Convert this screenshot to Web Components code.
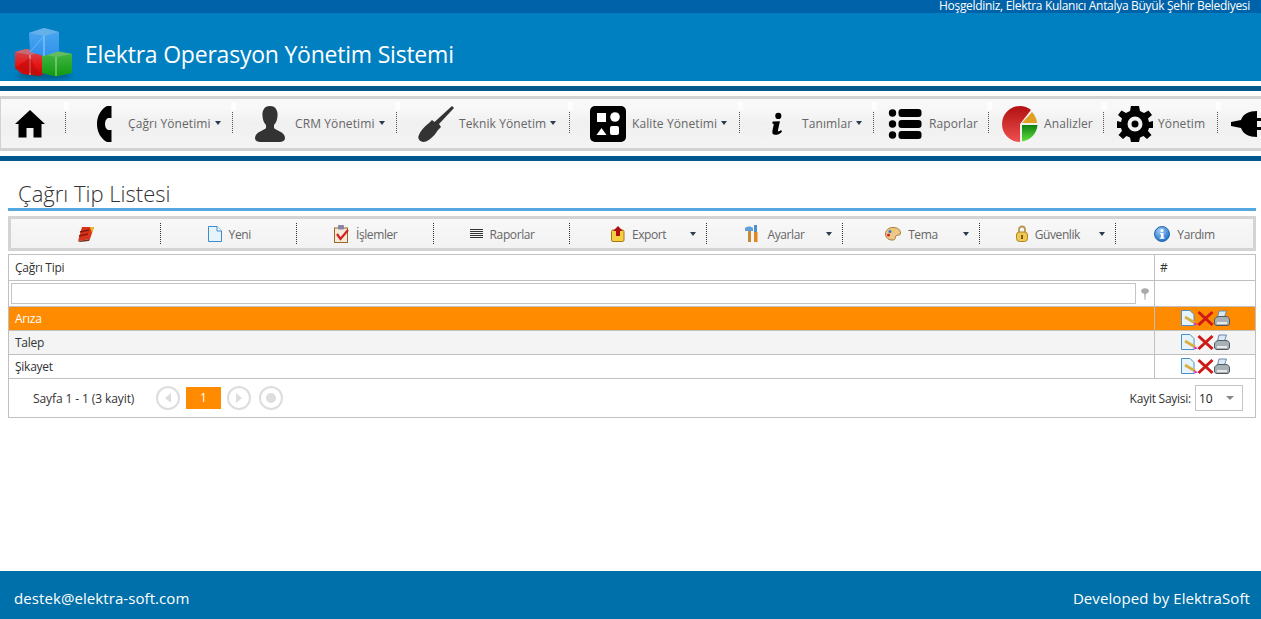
<!DOCTYPE html>
<html lang="tr"><head><meta charset="utf-8"><title>Elektra</title>
<style>
html,body{margin:0;padding:0;height:619px;overflow:hidden;background:#fff;font-family:"Open Sans","Noto Sans",sans-serif}
body{display:flex;flex-direction:column;width:1261px}
</style></head><body>
<el-header></el-header>
<el-menu>
<el-mi w="65" pad="14"><svg width="30" height="28" viewBox="0 0 30 28"><path d="M15 0 L30 14 L26.500 14 L26.500 27.500 L18.500 27.500 L18.500 18 L11.500 18 L11.500 27.500 L3.500 27.500 L3.500 14 L0 14Z" fill="#000"/></svg></el-mi>
<el-mi w="167" pad="31" gap="16" label="Çağrı Yönetimi" caret><svg width="15" height="36" viewBox="0 0 15 36"><path d="M10 0 H14.500 V12 H11 C9 13 8 15 8 18 C8 21 9 23 11 24 H14.500 V36 H10 C4 33 0 26 0 18 C0 10 4 3 10 0Z" fill="#000"/></svg></el-mi>
<el-mi w="164" pad="22" gap="10" label="CRM Yönetimi" caret><svg width="30" height="36" viewBox="0 0 30 36"><path d="M15 0 C21 0 23 5 22.500 10 C22.300 14 21 17 19 19 V22 C21 24.500 30 26 30 32 C30 35 27 36 24 36 H6 C3 36 0 35 0 32 C0 26 9 24.500 11 22 V19 C9 17 7.700 14 7.500 10 C7 5 9 0 15 0Z" fill="#333"/></svg></el-mi>
<el-mi w="173" pad="21" gap="5" label="Teknik Yönetim" caret><svg width="36" height="36" viewBox="0 0 36 36"><path d="M34 0 L36 2 L21 18 L23 21 L20 24 C17 29 12 34 8 35.500 C3 37 -.5 34 .5 30 C2 25 6 21 11 17 L14 14 L16.500 16Z" fill="#333"/></svg></el-mi>
<el-mi w="170" pad="20" gap="6" label="Kalite Yönetimi" caret><svg width="36" height="36" viewBox="0 0 36 36"><rect width="36" height="36" rx="5" fill="#000"/><rect x="7" y="7" width="9" height="9" fill="#fff"/><circle cx="25" cy="11" r="4.800" fill="#fff"/><path d="M11.500 22 L16.500 29 H6.500Z" fill="#fff"/><rect x="20" y="20" width="9" height="9" rx="2" fill="#fff"/></svg></el-mi>
<el-mi w="134" pad="31" gap="18" label="Tanımlar" caret><svg width="13" height="24" viewBox="0 0 16 28"><circle cx="9" cy="4" r="3.800" fill="#000"/><path d="M2 11 L11 10.500 L8.500 22 C8.300 23.500 10 23.500 12.500 21.500 L13.500 23.500 C10 27 6 28 3.500 27 C1.500 26.300 1.300 24 2 21 L3.500 14 L1.500 13.500Z" fill="#000"/></svg></el-mi>
<el-mi w="115" pad="14" gap="7" label="Raporlar"><svg width="34" height="32" viewBox="0 0 33 32"><g fill="#000"><circle cx="4" cy="5" r="3.700"/><circle cx="4" cy="16" r="3.700"/><circle cx="4" cy="27" r="3.700"/><rect x="10" y="1" width="23" height="8" rx="3"/><rect x="10" y="12" width="23" height="8" rx="3"/><rect x="10" y="23" width="23" height="8" rx="3"/></g></svg></el-mi>
<el-mi w="115" pad="13" gap="6" label="Analizler"><svg width="36" height="36" viewBox="0 0 36 36"><defs><linearGradient id="pr" x1="0" y1="0" x2="0" y2="1"><stop offset="0" stop-color="#b01010"/><stop offset="1" stop-color="#f05050"/></linearGradient><linearGradient id="pg" x1="0" y1="0" x2="0" y2="1"><stop offset="0" stop-color="#108010"/><stop offset="1" stop-color="#60e040"/></linearGradient></defs><path d="M18 0 A18 18 0 0 1 29 4 L18 18 L18 36 A18 18 0 0 1 18 0Z" fill="url(#pr)"/><path d="M30 6 A18 18 0 0 1 35 17 H20Z" fill="#e0a020"/><path d="M20 19 H35.500 A18 18 0 0 1 20 35.500Z" fill="url(#pg)"/></svg></el-mi>
<el-mi w="114" pad="13" gap="5" label="Yönetim"><svg width="36" height="36" viewBox="0 0 36 36"><path fill="#000" fill-rule="evenodd" d="M14 0 H22 L23 5 L27 7 L31.500 4.500 L35 9 L31 12.500 L32 16 L36 15 V22 L32 22 L31 25 L34.500 29 L30 33 L26.500 30 L23 31.500 L22 36 H14 L13 31.500 L9.500 30 L6 33 L1.500 29 L5 25 L4 22 H0 V15 L4 16 L5 12.500 L1 9 L4.500 4.500 L9 7 L13 5Z M18 10.500 A7.500 7.500 0 1 0 18 25.500 A7.500 7.500 0 1 0 18 10.500Z M18 14.500 A3.500 3.500 0 1 1 18 21.500 A3.500 3.500 0 1 1 18 14.500Z"/></svg></el-mi>
<el-mi w="60" pad="13"><svg width="40" height="36" viewBox="0 0 40 36"><path d="M0 16 L10 14 C12 8 18 5 26 5 V12 H38 V15 H26 V21 H38 V24 H26 V31 C18 31 12 28 10 22 L0 20Z" fill="#000"/></svg></el-mi>
</el-menu>
<el-rule></el-rule>
<el-title>Çağrı Tip Listesi</el-title>
<el-toolbar>
<el-tool><svg width="18" height="16" viewBox="0 0 18 16"><path d="M5 1 L17 1 L13 13 L1 15Z" fill="#d8341c"/><path d="M13 1 L17 1 L15 7Z" fill="#e8c020"/><path d="M3 6 L12 4 M2 10 L11 8" stroke="#8a1808" stroke-width="1.500"/><path d="M1 15 L13 13 L12 15 L3 16Z" fill="#7a3020"/></svg></el-tool>
<el-tool label="Yeni"><svg width="14" height="16" viewBox="0 0 14 16"><path d="M.5 .5 H9 L13.500 5 V15.500 H.5Z" fill="#e8f4fc" stroke="#3c8cd0"/><path d="M9 .5 V5 H13.500" fill="#fff" stroke="#3c8cd0"/></svg></el-tool>
<el-tool label="İşlemler"><svg width="15" height="18" viewBox="0 0 15 18"><rect x=".5" y="3" width="13" height="14.500" fill="#f4ead8" stroke="#a06428"/><rect x="4" y="0" width="6" height="4.500" rx="1" fill="#8a84a8"/><path d="M3 9 L6.500 14 L14 5" fill="none" stroke="#d02020" stroke-width="2.200"/></svg></el-tool>
<el-tool label="Raporlar"><svg width="13" height="10" viewBox="0 0 13 10"><path d="M0 .5 H13 M0 2.500 H13 M0 4.500 H13 M0 6.500 H13 M0 8.500 H13" stroke="#333"/></svg></el-tool>
<el-tool label="Export" caret><svg width="14" height="16" viewBox="0 0 14 16"><rect x=".5" y="4" width="12.500" height="11.500" rx="1.500" fill="#f4d040" stroke="#a87818"/><path d="M7 0 L12 5 H9 V10 H5 V5 H2Z" fill="#b01010"/></svg></el-tool>
<el-tool label="Ayarlar" caret><svg width="15" height="17" viewBox="0 0 15 17"><rect x="9" y="0" width="3" height="7" fill="#5090d0"/><rect x="9" y="7" width="3.500" height="10" fill="#e08820"/><rect x="3" y="5" width="3" height="12" fill="#c88838"/><path d="M0 3 C2 1 6 1 8 3 V6 H0Z" fill="#60a0d8"/></svg></el-tool>
<el-tool label="Tema" caret><svg width="16" height="14" viewBox="0 0 16 14"><path d="M8 .5 C13 .5 15.500 3 15.500 6 C15.500 8.500 13 8 11.500 8.500 C10 9 11 11 9.500 12.500 C7 14 .5 12.500 .5 7 C.5 3 4 .5 8 .5Z" fill="#eec88a" stroke="#a87838"/><circle cx="5" cy="4.500" r="1.500" fill="#3070d0"/><circle cx="3.500" cy="8" r="1.500" fill="#d02020"/><circle cx="9" cy="3.500" r="1.300" fill="#e8d040"/></svg></el-tool>
<el-tool label="Güvenlik" caret><svg width="12" height="17" viewBox="0 0 12 17"><path d="M3 8 V4.500 C3 .5 9 .5 9 4.500 V8" fill="none" stroke="#b89850" stroke-width="1.800"/><rect x=".5" y="7" width="11" height="9.500" rx="3" fill="#eec850" stroke="#b08828"/><rect x="5" y="10" width="2" height="4" fill="#805818"/></svg></el-tool>
<el-tool label="Yardım"><svg width="16" height="16" viewBox="0 0 16 16"><defs><radialGradient id="ib" cx=".4" cy=".3" r=".8"><stop offset="0" stop-color="#a0d0f8"/><stop offset="1" stop-color="#1060c0"/></radialGradient></defs><circle cx="8" cy="8" r="7.500" fill="url(#ib)" stroke="#2868b0"/><circle cx="8" cy="4.500" r="1.500" fill="#fff"/><path d="M6 7 H9.500 V11.500 H10.500 V12.800 H5.700 V11.500 H7 V8.300 H6Z" fill="#fff"/></svg></el-tool>
</el-toolbar>
<el-grid></el-grid>
<el-footer></el-footer>
<template id="acts"><svg width="50" height="17" viewBox="0 0 50 17"><path d="M1.500 .5 H10 L14 4.500 V15.500 H1.500Z" fill="#e8f4fc" stroke="#4890c8"/><path d="M5 7 L15 13" stroke="#d8b048" stroke-width="2.800"/><path d="M14 12 L18 14.500 L14.500 15.500Z" fill="#e030c0"/><path d="M18.500 2 L32.500 15 M32.500 2 L18.500 15" stroke="#d01818" stroke-width="3"/><path d="M39 1 H46.500 L44.500 7 H37.500Z" fill="#dce8f4" stroke="#6888a8"/><path d="M34.500 10 C35 7.500 37 6.500 39 6.500 H46 C48 6.500 49.500 8 49.500 10 V13 C49.500 14.500 48.500 15.500 47 15.500 H37 C35.500 15.500 34.500 14.500 34.500 13Z" fill="#a8b0b8" stroke="#505860"/><rect x="37" y="12" width="10" height="2" fill="#e8e8e8"/></svg></template>
<script>
const F='"Open Sans","Noto Sans",sans-serif';
function def(n,html,extra){customElements.define(n,class extends HTMLElement{connectedCallback(){if(this.shadowRoot)return;const s=this.attachShadow({mode:'open'});s.innerHTML=typeof html==='function'?html(this):html;extra&&extra(s,this);}});}
def('el-header',`<style>
:host{display:block;flex:none}
.top{height:13px;background:#0062a8;color:#fff;font:12px/11px ${F};text-align:right;padding-right:11px;letter-spacing:-.31px;white-space:nowrap}
.main{height:68px;background:#0080c0;display:flex;align-items:center;gap:9px;padding-left:14px;box-sizing:border-box}
.t{color:#fff;font:23px/1 ${F};letter-spacing:-.22px;margin-top:15px}
.logo{margin-top:13px;height:56px}
.w{height:5px;background:#fff}.b{height:5px;background:#00588c}
</style><div class="top">Hoşgeldiniz, Elektra Kulanıcı Antalya Büyük Şehir Belediyesi</div>
<div class="main"><svg class="logo" width="62" height="56" viewBox="0 0 62 56"><defs>
<linearGradient id="lb" x1="0" y1="0" x2="0" y2="1"><stop offset="0" stop-color="#4ea8ee"/><stop offset="1" stop-color="#2f92ee"/></linearGradient>
<linearGradient id="lr" x1="0" y1="0" x2="0" y2="1"><stop offset="0" stop-color="#c85058"/><stop offset=".55" stop-color="#e81818"/><stop offset="1" stop-color="#c00808"/></linearGradient>
<linearGradient id="lg" x1="0" y1="0" x2="0" y2="1"><stop offset="0" stop-color="#48b848"/><stop offset="1" stop-color="#109a10"/></linearGradient>
<filter id="bl"><feGaussianBlur stdDeviation="2"/></filter><filter id="sf"><feGaussianBlur stdDeviation=".35"/></filter></defs>
<ellipse cx="30" cy="50" rx="28" ry="3.500" fill="#004868" opacity=".6" filter="url(#bl)"/>
<g filter="url(#sf)">
<path d="M1 26 L12 23 L29 26 V48 L26 50 L8 48 L1 42Z" fill="url(#lr)"/><path d="M1 26 L12 23 L29 26 L16 29Z" fill="#c86a74"/><path d="M16 29 V49" stroke="#fff" stroke-opacity=".7"/><path d="M1 42 L16 32 L26 50" fill="#b80808" fill-opacity=".5"/>
<path d="M28 28 L42 25 L58 28 V47 L42 50.500 L28 47Z" fill="url(#lg)"/><path d="M28 28 L42 25 L58 28 L42 31Z" fill="#62bc62"/><path d="M42 31 V50" stroke="#fff" stroke-opacity=".6"/>
<path d="M15 7 L30 2 L45 6 V25 L30 30 L16 26Z" fill="url(#lb)"/><path d="M15 7 L30 2 L45 6 L30 10Z" fill="#64b0ea"/><path d="M30 10 V30" stroke="#b8e0ff" stroke-width=".8"/><path d="M16 26 L30 10" stroke="#8cc8f4" stroke-width=".6"/></g></svg><span class="t">Elektra Operasyon Yönetim Sistemi</span></div>
<div class="w"></div><div class="b"></div>`);
def('el-menu',`<style>
:host{display:flex;flex:none;box-sizing:border-box;height:55px;margin-top:5px;border:solid #d2d2d2;border-width:3px 0;border-left:1px solid #d2d2d2;background:linear-gradient(#f8f8f8,#f8f8f8 20%,#f0f0f0 50%,#f4f4f4);overflow:hidden;align-items:stretch}
</style><slot></slot>`);
def('el-rule',`<style>:host{display:block;flex:none;height:5px;margin-top:5px;background:#00588c}</style>`);
def('el-mi',e=>{const w=e.getAttribute('w'),p=e.getAttribute('pad'),g=e.getAttribute('gap')||0,l=e.getAttribute('label');return `<style>
:host{display:flex;flex:none;box-sizing:border-box;width:${w}px;align-items:center;padding-left:${p}px;gap:${g}px;position:relative;color:#666;font:12px ${F};letter-spacing:.1px;white-space:nowrap}
.sep{position:absolute;right:0;top:13px;height:21px;border-right:1px dotted #555}
.n{position:absolute;right:-3px;top:3px;height:8px;width:5px;background:#fff;opacity:.7}
.c{display:inline-block;border:solid transparent;border-width:4px 3px 0;border-top-color:#2a3a50;margin:0 0 3px 4px}
</style><slot></slot>${l?`<span>${l}${e.hasAttribute('caret')?'<i class="c"></i>':''}</span>`:''}<i class="sep"></i><i class="n"></i>`});
def('el-title',`<style>
:host{display:block;flex:none;margin:17px 5px 0 8px;height:33px;box-sizing:border-box;border-bottom:3px solid #55a8e0;padding-left:10px;color:#333;font:300 22px/31px ${F}}
</style><slot></slot>`);
def('el-toolbar',`<style>
:host{display:grid;flex:none;grid-template-columns:150px repeat(7,136.45px) 1fr;box-sizing:border-box;height:35px;margin:5px 5px 0 8px;border:3px solid #d4d4d4;background:linear-gradient(#f8f8f8,#f2f2f2)}
</style><slot></slot>`);
def('el-tool',e=>{const l=e.getAttribute('label');return `<style>
:host{display:flex;align-items:center;justify-content:center;gap:7px;position:relative;color:#666;font:12px ${F};letter-spacing:-.4px}
:host(:not(:last-child))::after{content:"";position:absolute;right:0;top:4px;bottom:4px;border-right:1px dotted #333}
.c{position:absolute;right:11px;top:13px;border:solid transparent;border-width:4px 3.500px 0;border-top-color:#2a3a50}
span{margin-top:1px}
</style><slot></slot>${l?`<span>${l}</span>`:''}${e.hasAttribute('caret')?'<i class="c"></i>':''}`});
def('el-actions',`<slot></slot>`,s=>{s.appendChild(document.getElementById('acts').content.cloneNode(true));const st=document.createElement('style');st.textContent=':host{display:flex;justify-content:center}svg{display:block}';s.appendChild(st);});
def('el-pager',`<style>
:host{display:flex;align-items:center;height:38px;padding:0 12px 0 24px;font:12px ${F};letter-spacing:-.1px;color:#333}
.info{width:123px}
.b{box-sizing:border-box;width:24px;height:24px;border:2px solid #ddd;border-radius:50%;display:flex;align-items:center;justify-content:center;flex:none}
.n{width:35px;height:22px;background:#ff8c00;color:#fff;text-align:center;line-height:22px;margin:0 6px;flex:none}
.gap{width:8px}.sp{flex:1}
.lbl{letter-spacing:-.25px}
.sel{box-sizing:border-box;width:48px;height:26px;border:1px solid #c4c4c4;margin-left:4px;display:flex;align-items:center;justify-content:space-between;padding:0 8px 0 3px;color:#222}
.c{border:solid transparent;border-width:4px 4px 0;border-top-color:#888}
</style><span class="info">Sayfa 1 - 1 (3 kayit)</span>
<span class="b"><svg width="6" height="10"><path d="M6 0 V10 L0 5Z" fill="#ddd"/></svg></span><span class="n">1</span>
<span class="b"><svg width="6" height="10"><path d="M0 0 V10 L6 5Z" fill="#ddd"/></svg></span><span class="gap"></span>
<span class="b"><svg width="10" height="10"><circle cx="5" cy="5" r="5" fill="#ddd"/></svg></span>
<span class="sp"></span><span class="lbl">Kayit Sayisi:</span><span class="sel">10<i class="c"></i></span>`);
def('el-grid',`<style>
:host{display:block;flex:none;margin:3px 5px 0 8px;color:#333;font:12px ${F};letter-spacing:-.25px}
table{border-collapse:collapse;width:100%;table-layout:fixed;border:1px solid #c0c0c0;box-sizing:border-box}
td{border:1px solid #c0c0c0;padding:0 6px;box-sizing:border-box}
td:last-child{width:101px;padding:0 5px}
tr.h td{height:26px}tr.r td{height:24px}
tr.s td{background:#ff8c00;color:#fff}tr.a td{background:#f4f4f4}
.f{display:flex;align-items:center;gap:5px;padding-right:3px}
td.fc{padding:0 2px}
.in{flex:1;box-sizing:border-box;height:21px;border:1px solid #c4c4c4;background:#fff}
</style><table>
<tr class="h"><td>Çağrı Tipi</td><td>#</td></tr>
<tr class="h"><td class="fc"><div class="f"><div class="in"></div><svg width="8" height="12" viewBox="0 0 8 12"><ellipse cx="4" cy="3" rx="3.800" ry="2.800" fill="#aaa"/><path d="M3.300 5 H4.700 L4.300 12 H3.700Z" fill="#999"/></svg></div></td><td></td></tr>
<tr class="r s"><td>Arıza</td><td><el-actions></el-actions></td></tr>
<tr class="r a"><td>Talep</td><td><el-actions></el-actions></td></tr>
<tr class="r"><td>Şikayet</td><td><el-actions></el-actions></td></tr>
<tr><td colspan="2" style="padding:0"><el-pager></el-pager></td></tr>
</table>`);
def('el-footer',`<style>
:host{display:flex;flex:none;margin-top:auto;height:48px;box-sizing:border-box;padding:6px 11px 0 14px;background:#0070aa;color:#fff;align-items:center;justify-content:space-between;font:15px ${F};letter-spacing:.08px}
</style><span>destek@elektra-soft.com</span><span>Developed by ElektraSoft</span>`);
</script>
</body></html>
